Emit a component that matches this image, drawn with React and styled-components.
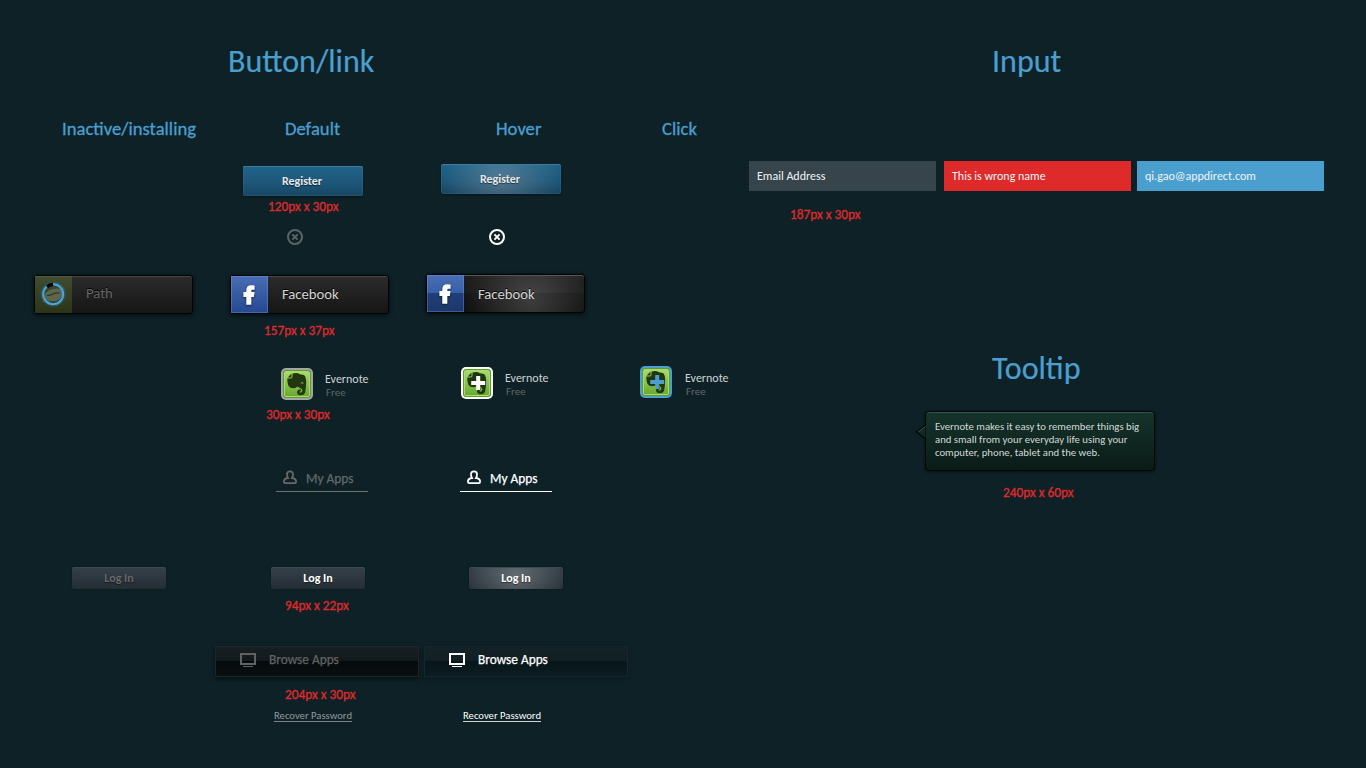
import React from "react";
import styled, { createGlobalStyle, css } from "styled-components";
import { FaFacebookF } from "react-icons/fa";

const GlobalStyle = createGlobalStyle`
  * { box-sizing: border-box; }
  body {
    margin: 0;
    background: #0d2127;
    font-family: Carlito, Calibri, Lato, "Liberation Sans", sans-serif;
  }
`;

const BLUE = "#4a9fcf";
const RED = "#de2a2b";

const Page = styled.main`
  display: flex;
  width: 1366px;
  height: 768px;
  overflow: hidden;
`;

const ButtonSection = styled.section`
  width: 740px;
`;

const SideSection = styled.section`
  flex: 1;
`;

const Row = styled.div`
  display: grid;
  grid-template-columns: 210px 212px 208px 110px;
  height: ${(p) => p.$h}px;
`;

const Cell = styled.div`
  display: flex;
  flex-direction: column;
  align-items: flex-start;
  min-width: 0;
  padding: ${(p) => p.$y}px 0 0 ${(p) => p.$x}px;
`;

const Text = styled.span`
  display: block;
  white-space: nowrap;
`;

const Title = styled(Text).attrs({ as: "h1" })`
  margin: 0;
  font-size: 32px;
  font-weight: 400;
  line-height: 42px;
  color: ${BLUE};
  -webkit-text-stroke: 0.2px ${BLUE};
`;

const ColumnHead = styled(Text).attrs({ as: "h2" })`
  margin: 0;
  font-size: 18.67px;
  font-weight: 400;
  line-height: 24px;
  color: ${BLUE};
  -webkit-text-stroke: 0.3px ${BLUE};
`;

const Note = styled(Text)`
  margin: ${(p) => p.$top || 0}px 0 0 ${(p) => p.$left || 0}px;
  font-size: 13.33px;
  font-weight: 400;
  -webkit-text-stroke: 0.35px ${RED};
  line-height: 16px;
  color: ${RED};
`;

const RegisterButton = styled.button`
  width: 120px;
  height: 30px;
  padding: 0 2px 0 0;
  border: 0;
  border-radius: 2px;
  font: 700 12px/30px Carlito, Calibri, Lato, sans-serif;
  color: #e4e8ea;
  text-align: center;
  text-shadow: 0 1px 1px rgba(0, 0, 0, 0.55);
  background: linear-gradient(#206389, #1d5779 55%, #174663);
  box-shadow: inset 0 1px 0 #3f7c9d, inset 0 0 0 1px rgba(60, 125, 160, 0.25), 0 1px 2px rgba(0, 0, 0, 0.4);
  ${(p) =>
    p.$hover &&
    css`
      background: radial-gradient(ellipse 58px 46px at 50% 50%, rgba(150, 165, 175, 0.42), rgba(150, 165, 175, 0) 100%),
        linear-gradient(#206389, #1d5779 55%, #174560);
    `}
`;

const CloseSvg = styled.svg`
  display: block;
  color: ${(p) => (p.$hover ? "#ffffff" : "#5b6467")};
`;

const AppButton = styled.div`
  display: flex;
  width: 159px;
  height: 39px;
  border: 1px solid #020303;
  border-radius: 3px;
  background: linear-gradient(#2b2b2b, #161616);
  box-shadow: inset 0 1px 0 #464646, 0 1px 4px rgba(0, 0, 0, 0.7);
  ${(p) =>
    p.$hover &&
    css`
      background: linear-gradient(transparent 50%, rgba(0, 0, 0, 0.14) 50%),
        radial-gradient(ellipse 66px 60px at 66% 65%, #474747, rgba(30, 30, 30, 0) 100%),
        linear-gradient(#1e1e1e, #131313);
      box-shadow: inset 0 1px 0 #5a5654, 0 1px 4px rgba(0, 0, 0, 0.7);
    `}
`;

const Tile = styled.div`
  display: flex;
  align-items: center;
  justify-content: center;
  width: 37px;
  height: 37px;
  padding-right: ${(p) => (p.$path ? 0 : 2)}px;
  padding-top: ${(p) => (p.$path ? 0 : 1)}px;
  color: #fff;
  background: ${(p) => (p.$path ? "linear-gradient(#414c31, #2a3419)" : "linear-gradient(#4a6eb5, #254990)")};
  box-shadow: ${(p) =>
    p.$path ? "inset 0 1px 0 rgba(255,255,255,.1)" : "inset 0 0 0 1px rgba(125,160,225,.35)"};
  ${(p) =>
    p.$hover &&
    css`
      background: linear-gradient(#4a6eb5, #375fa9 49%, #203f78 50%, #1d376b);
    `}
  svg {
    overflow: visible;
    filter: ${(p) => (p.$path ? "none" : "drop-shadow(0 1px 1px rgba(0,0,0,.6))")};
  }
`;

const AppName = styled(Text)`
  margin-left: 14px;
  font-size: 14.67px;
  line-height: ${(p) => p.$line || 37}px;
  color: ${(p) => (p.$off ? "#676767" : "#d6d6d6")};
  text-shadow: 0 -1px 0 #000;
`;

const EvernoteItem = styled.div`
  display: flex;
  gap: ${(p) => p.$gap}px;
`;

const EvernoteTile = styled.div`
  width: 32px;
  height: 32px;
  padding: 2px;
  border-radius: 5px;
  background: ${(p) => p.$frame};
  svg { display: block; }
`;

const EvernoteText = styled.div`
  padding-top: ${(p) => p.$top}px;
`;

const EvernoteName = styled(Text)`
  font-size: 12px;
  line-height: 14px;
  color: #cfd2d3;
`;

const EvernotePrice = styled(Text)`
  padding-left: 1px;
  font-size: 11px;
  line-height: 13px;
  color: #626667;
`;

const MyAppsLink = styled.div`
  display: flex;
  width: 92px;
  height: 26px;
  padding-left: 7px;
  gap: 9px;
  color: ${(p) => (p.$hover ? "#ffffff" : "#66696a")};
  border-bottom: 1px solid ${(p) => (p.$hover ? "#ffffff" : "#6f6f6f")};
  svg { display: block; margin-top: 4px; }
`;

const MyAppsText = styled(Text)`
  font-size: 13.4px;
  line-height: 26px;
  -webkit-text-stroke: 0.25px currentColor;
`;

const LoginButton = styled.button`
  width: 94px;
  height: 22px;
  padding: 0;
  border: 0;
  border-radius: 2px;
  font: 700 12px/22px Carlito, Calibri, Lato, sans-serif;
  color: ${(p) => (p.$off ? "#67696b" : "#ffffff")};
  text-align: center;
  text-shadow: 0 1px 1px rgba(0, 0, 0, 0.5);
  background: linear-gradient(#34404a, #252d34);
  box-shadow: inset 0 1px 0 #3d4952, 0 0 2px rgba(0, 0, 0, 0.35);
  ${(p) =>
    p.$hover &&
    css`
      background: radial-gradient(ellipse 48px 34px at 50% 40%, rgba(150, 155, 155, 0.5), rgba(130, 135, 135, 0) 100%),
        linear-gradient(#34404a, #2c343b);
    `}
`;

const BrowseButton = styled.div`
  display: flex;
  align-items: center;
  width: 204px;
  height: 31px;
  padding-left: 24px;
  gap: 13px;
  color: ${(p) => (p.$hover ? "#ffffff" : "#606364")};
  border: 1px solid ${(p) => (p.$hover ? "#15272c" : "#1b2628")};
  background: ${(p) =>
    p.$hover
      ? "linear-gradient(#142227, #112025 50%, #08161a 50%, #0b1b20)"
      : "linear-gradient(#171f22, #11191b 50%, #050b0c 50%, #0a0f10)"};
  box-shadow: 0 2px 4px rgba(0, 0, 0, ${(p) => (p.$hover ? 0.2 : 0.55)});
  svg { margin-bottom: 3px; }
`;

const BrowseText = styled(Text)`
  padding-bottom: 3px;
  font-size: 13.33px;
  line-height: 24px;
  -webkit-text-stroke: 0.25px currentColor;
`;

const RecoverLink = styled(Text)`
  font-size: 10.67px;
  line-height: 12px;
  height: 12px;
  color: ${(p) => (p.$hover ? "#ffffff" : "#94999b")};
  border-bottom: 1px solid ${(p) => (p.$hover ? "#d0d2d3" : "#7c8385")};
`;

const Inputs = styled.div`
  display: flex;
  padding-left: 9px;
`;

const Field = styled.div`
  width: 187px;
  height: 30px;
  margin-right: ${(p) => p.$gap || 0}px;
  padding-left: 8px;
  background: ${(p) => p.$bg};
`;

const FieldText = styled(Text)`
  font-size: 12px;
  line-height: 30px;
  color: #eff3f4;
`;

const SideBlock = styled.div`
  height: ${(p) => p.$h}px;
  padding: ${(p) => p.$y || 0}px 0 0 ${(p) => p.$x || 0}px;
`;

const TooltipBox = styled.div`
  position: relative;
  width: 230px;
  height: 60px;
  padding: 8px 0 0 9px;
  border: 1px solid #020606;
  border-radius: 4px;
  background: linear-gradient(#15342b, #0b1b17);
  box-shadow: inset 0 1px 0 #39564d, 0 1px 3px rgba(0, 0, 0, 0.5);
`;

const TooltipArrow = styled.svg`
  position: absolute;
  left: -11px;
  top: 11px;
`;

const TooltipLine = styled(Text)`
  font-size: 10.74px;
  line-height: 13px;
  color: #d2d8d6;
`;

function CloseIcon({ hover }) {
  return (
    <CloseSvg $hover={hover} width="16" height="16" viewBox="0 0 16 16" fill="none" stroke="currentColor" strokeWidth="2">
      <circle cx="8" cy="8" r="7" />
      <path d="M5.4 5.4 10.6 10.6M10.6 5.4 5.4 10.6" />
    </CloseSvg>
  );
}

function PathLogo() {
  return (
    <svg width="29" height="29" viewBox="0 0 29 29" fill="none">
      <path d="M3 23 6 19Q5 11 13 9Q20 8 23 9L25 7 24 11Q24 19 17 21Q11 22 7 20Z" fill="#5c664f" />
      <path d="M8 15.5Q11.5 15.5 14 14T20.5 13" stroke="#2c3523" strokeWidth="1.2" />
      <circle cx="14.2" cy="14.2" r="10.5" stroke="#2c87bd" strokeWidth="4" opacity=".3" />
      <circle cx="14.2" cy="14.2" r="10" stroke="#4aa5dd" strokeWidth="2" />
      <path d="M8 6.8Q11 4.5 14 4.3" stroke="#050707" strokeWidth="3.4" />
    </svg>
  );
}

function EvernoteLogo({ plus, id }) {
  return (
    <svg width="28" height="28" viewBox="2 2 28 28">
      <defs>
        <linearGradient id={id} x1="0" y1="0" x2="0" y2="1">
          <stop offset="0" stopColor="#a9dc6c" />
          <stop offset="1" stopColor="#68a832" />
        </linearGradient>
      </defs>
      <rect x="2" y="2" width="28" height="28" rx="3" fill="#5f9a2c" />
      <rect x="3.5" y="3.5" width="25" height="25" rx="1.5" fill={`url(#${id})`} stroke="#a5db70" />
      <path
        d="M11.5 5.5Q16 4 19 6.2L23 7Q25 8.5 25.2 14Q25 21 24 25Q23 27.3 19.5 27.3Q15.8 27 16 23.8Q16.5 21 19.8 21.3V23.3Q18 23.3 18.7 24.6Q21.3 25.2 21.5 22.3Q21.3 20.3 18.5 19.7L16.2 18.5Q15.5 20.3 12.5 20.3Q9 20.3 7.5 18Q6 14 6.3 10.5H9.8Q11.5 10.3 11.5 8.5Z"
        fill="#22370f"
      />
      <path d="M6.8 9.5 10.5 5.5V9.5Z" fill="#22370f" />
      <path d="M19.5 15.5Q21 13 22.8 15.8Q21 15 19.5 15.5Z" fill="#8cc653" />
      {plus && <path d="M17.2 9V23M10.2 16H24.2" stroke={plus} strokeWidth="4" />}
    </svg>
  );
}

function PersonIcon() {
  return (
    <svg width="14" height="15" viewBox="0 0 14 15" fill="none" stroke="currentColor" strokeWidth="1.8">
      <path d="M5 8Q4 6.5 4 4.3Q4 1.3 7 1.3T10 4.3Q10 6.5 9 8Q13.1 8.6 13.1 11.5Q13.1 13.2 11.8 13.2H2.2Q.9 13.2 .9 11.5Q.9 8.6 5 8Z" />
    </svg>
  );
}

function ScreenIcon() {
  return (
    <svg width="16" height="14" viewBox="0 0 16 14" fill="none" stroke="currentColor">
      <rect x="1" y="1" width="14" height="10" strokeWidth="2" />
      <path d="M3 13.5H13" strokeWidth="1" />
    </svg>
  );
}

function Facebook({ hover }) {
  return (
    <AppButton $hover={hover}>
      <Tile $hover={hover}>
        <FaFacebookF size={18} stroke="currentColor" strokeWidth="44" />
      </Tile>
      <AppName $line={hover ? 39 : 37}>Facebook</AppName>
    </AppButton>
  );
}

function Evernote({ frame, plus, id, gap = 12, top = 4 }) {
  return (
    <EvernoteItem $gap={gap}>
      <EvernoteTile $frame={frame}>
        <EvernoteLogo plus={plus} id={id} />
      </EvernoteTile>
      <EvernoteText $top={top}>
        <EvernoteName>Evernote</EvernoteName>
        <EvernotePrice>Free</EvernotePrice>
      </EvernoteText>
    </EvernoteItem>
  );
}

function MyApps({ hover }) {
  return (
    <MyAppsLink $hover={hover}>
      <PersonIcon />
      <MyAppsText>My Apps</MyAppsText>
    </MyAppsLink>
  );
}

function BrowseApps({ hover }) {
  return (
    <BrowseButton $hover={hover}>
      <ScreenIcon />
      <BrowseText>Browse Apps</BrowseText>
    </BrowseButton>
  );
}

export default function App() {
  return (
    <Page>
      <GlobalStyle />
      <ButtonSection>
        <SideBlock $h={100} $x={228} $y={41}>
          <Title>Button/link</Title>
        </SideBlock>
        <Row $h={50}>
          <Cell $x={62} $y={17}><ColumnHead>Inactive/installing</ColumnHead></Cell>
          <Cell $x={75} $y={17}><ColumnHead>Default</ColumnHead></Cell>
          <Cell $x={74} $y={17}><ColumnHead>Hover</ColumnHead></Cell>
          <Cell $x={32} $y={17}><ColumnHead>Click</ColumnHead></Cell>
        </Row>
        <Row $h={70}>
          <Cell />
          <Cell $x={33} $y={16}>
            <RegisterButton>Register</RegisterButton>
            <Note $left={25} $top={3}>120px x 30px</Note>
          </Cell>
          <Cell $x={19} $y={14}><RegisterButton $hover>Register</RegisterButton></Cell>
        </Row>
        <Row $h={40}>
          <Cell />
          <Cell $x={77} $y={9}><CloseIcon /></Cell>
          <Cell $x={67} $y={9}><CloseIcon hover /></Cell>
        </Row>
        <Row $h={90}>
          <Cell $x={34} $y={15}>
            <AppButton>
              <Tile $path><PathLogo /></Tile>
              <AppName $off $line={35}>Path</AppName>
            </AppButton>
          </Cell>
          <Cell $x={20} $y={15}>
            <Facebook />
            <Note $left={34} $top={9}>157px x 37px</Note>
          </Cell>
          <Cell $x={4} $y={14}><Facebook hover /></Cell>
        </Row>
        <Row $h={90}>
          <Cell />
          <Cell $x={71} $y={18}>
            <Evernote frame="#a3a5a7" id="ever-default" />
            <Note $left={-15} $top={7}>30px x 30px</Note>
          </Cell>
          <Cell $x={39} $y={17}><Evernote frame="#ffffff" plus="#ffffff" id="ever-hover" /></Cell>
          <Cell $x={10} $y={16}>
            <Evernote frame={BLUE} plus={BLUE} id="ever-click" gap={13} top={5} />
          </Cell>
        </Row>
        <Row $h={100}>
          <Cell />
          <Cell $x={66} $y={26}><MyApps /></Cell>
          <Cell $x={38} $y={26}><MyApps hover /></Cell>
        </Row>
        <Row $h={90}>
          <Cell $x={72} $y={27}><LoginButton $off>Log In</LoginButton></Cell>
          <Cell $x={61} $y={27}>
            <LoginButton>Log In</LoginButton>
            <Note $left={14} $top={9}>94px x 22px</Note>
          </Cell>
          <Cell $x={47} $y={27}><LoginButton $hover>Log In</LoginButton></Cell>
        </Row>
        <Row $h={75}>
          <Cell />
          <Cell $x={5} $y={16}>
            <BrowseApps />
            <Note $left={70} $top={10}>204px x 30px</Note>
          </Cell>
          <Cell $x={2} $y={16}><BrowseApps hover /></Cell>
        </Row>
        <Row $h={63}>
          <Cell />
          <Cell $x={64} $y={5}><RecoverLink>Recover Password</RecoverLink></Cell>
          <Cell $x={41} $y={5}><RecoverLink $hover>Recover Password</RecoverLink></Cell>
        </Row>
      </ButtonSection>
      <SideSection>
        <SideBlock $h={161} $x={252} $y={41}><Title>Input</Title></SideBlock>
        <Inputs>
          <Field $bg="#37444c" $gap={8}><FieldText>Email Address</FieldText></Field>
          <Field $bg={RED} $gap={6}><FieldText>This is wrong name</FieldText></Field>
          <Field $bg={BLUE}><FieldText>qi.gao@appdirect.com</FieldText></Field>
        </Inputs>
        <SideBlock $h={157} $x={50} $y={16}><Note>187px x 30px</Note></SideBlock>
        <SideBlock $h={63} $x={252}>
          <Title>Tooltip</Title>
        </SideBlock>
        <SideBlock $h={74} $x={185}>
          <TooltipBox>
            <TooltipArrow width="11" height="18" viewBox="0 0 11 18">
              <path d="M10.5 2 1.5 9 10.5 16" fill="#11291f" stroke="#020606" strokeWidth="1.4" />
              <path d="M10.5 3.5 3 9" stroke="#39564d" strokeWidth="1" />
            </TooltipArrow>
            <TooltipLine>Evernote makes it easy to remember things big</TooltipLine>
            <TooltipLine>and small from your everyday life using your</TooltipLine>
            <TooltipLine>computer, phone, tablet and the web.</TooltipLine>
          </TooltipBox>
        </SideBlock>
        <SideBlock $x={263} $y={0}><Note>240px x 60px</Note></SideBlock>
      </SideSection>
    </Page>
  );
}
